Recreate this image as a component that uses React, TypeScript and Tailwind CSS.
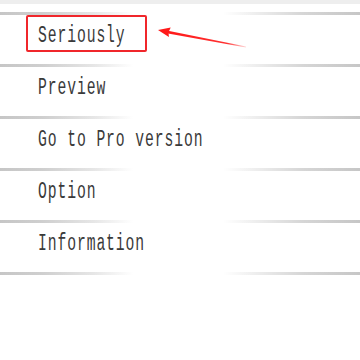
import React from "react";

const items = ["Seriously", "Preview", "Go to Pro version", "Option", "Information"];

function Divider() {
  return (
    <div className="h-[3px] w-full bg-[linear-gradient(to_right,#c6c6c6_0%,#cfcfcf_12%,#e6e6e6_26%,#ffffff_37%,#ffffff_62%,#ececec_72%,#d6d6d6_84%,#c6c6c6_100%)]" />
  );
}

export default function App() {
  return (
    <div className="relative w-[360px] h-[360px] bg-white overflow-hidden">
      <div className="h-[4px] bg-[#eeeeee]" />
      <div className="h-[8px]" />
      <Divider />
      {items.map((t) => (
        <React.Fragment key={t}>
          <div className="h-[49px] flex items-center pl-[38px] pb-[6px]">
            <span
              className="origin-left scale-x-[0.64] tracking-[1.4px] text-[23px] leading-none text-[#3a3a3a] whitespace-nowrap"
              style={{ fontFamily: '"Liberation Mono", monospace' }}
            >
              {t}
            </span>
          </div>
          <Divider />
        </React.Fragment>
      ))}
      <div className="absolute left-[26px] top-[15px] w-[121px] h-[37px] border-2 border-[#f0262b] rounded-[2px]" />
      <svg className="absolute left-0 top-0" width="360" height="360" viewBox="0 0 360 360">
        <defs>
          <linearGradient id="fade" x1="170" y1="32" x2="246" y2="47" gradientUnits="userSpaceOnUse">
            <stop offset="0" stopColor="#ff1a1a" stopOpacity="1" />
            <stop offset="0.75" stopColor="#ff1a1a" stopOpacity="0.9" />
            <stop offset="1" stopColor="#ff1a1a" stopOpacity="0.15" />
          </linearGradient>
        </defs>
        <polygon points="158,30 170.7,27.6 168.5,32.3 168.9,37" fill="#ff1a1a" />
        <polygon points="168,30.8 168,33.6 246,47.4 246,46.6" fill="url(#fade)" />
      </svg>
    </div>
  );
}
